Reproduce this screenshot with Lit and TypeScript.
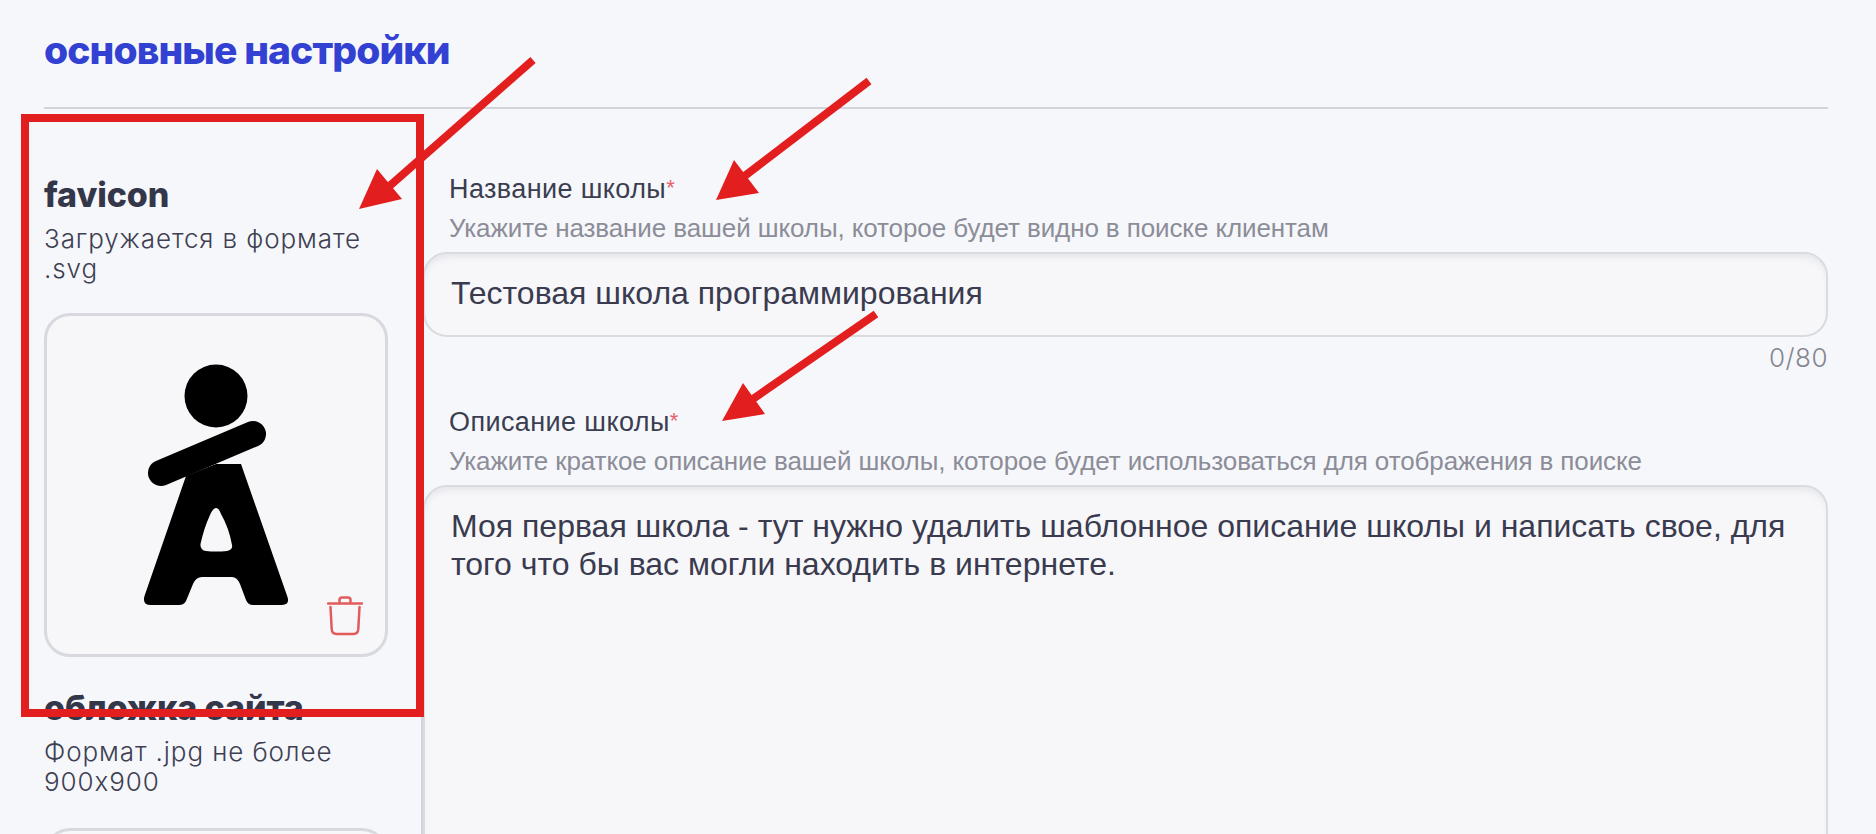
import { html, css, LitElement } from 'lit';
import { customElement } from 'lit/decorators.js';

@customElement('app-root')
export class AppRoot extends LitElement {
  static styles = css`
    :host {
      display: block;
      position: relative;
      height: 834px;
      overflow: hidden;
      background: #f6f7fb;
      color: #383a4e;
      font-family: "Liberation Sans", Arial, sans-serif;
    }

    .page {
      padding: 0 48px 0 44px;
    }

    .title {
      box-sizing: border-box;
      height: 109px;
      margin: 0;
      padding-top: 28px;
      font-family: Inter, sans-serif;
      font-size: 39px;
      line-height: 44px;
      font-weight: 800;
      letter-spacing: -0.9px;
      color: #3341d2;
      border-bottom: 2px solid #d2d4db;
    }

    .columns {
      display: flex;
    }

    .side {
      width: 379px;
      flex: none;
      box-sizing: border-box;
      height: 717px;
      margin-top: 8px;
      padding-top: 57px;
      border-right: 2px solid #d2d4db;
    }

    .side h3 {
      margin: 0;
      font-family: Inter, sans-serif;
      font-size: 34px;
      line-height: 42px;
      font-weight: 800;
      letter-spacing: -0.1px;
      color: #34364a;
    }

    .side p {
      margin: 8px 0 0;
      width: 340px;
      font-family: Inter, sans-serif;
      font-size: 26px;
      line-height: 30px;
      font-weight: 300;
      letter-spacing: 0.9px;
      color: #3e4052;
    }

    .card {
      position: relative;
      display: flex;
      align-items: center;
      justify-content: center;
      box-sizing: border-box;
      width: 344px;
      height: 344px;
      margin-top: 29px;
      background: #f7f7fa;
      border: 3px solid #d8d9df;
      border-radius: 26px;
    }

    .card + h3 {
      margin-top: 30px;
    }

    .card.cover {
      margin-top: 31px;
    }

    .trash {
      position: absolute;
      right: 22px;
      bottom: 18px;
    }

    .main {
      flex: 1;
      min-width: 0;
      padding-top: 61px;
    }

    .label {
      margin-left: 26px;
      font-size: 27px;
      line-height: 36px;
      letter-spacing: 0.4px;
      color: #3b3d50;
    }

    .label span {
      color: #e8606e;
      font-size: 22px;
      vertical-align: 3px;
    }

    .hint {
      margin: 5px 0 0 26px;
      font-size: 26px;
      line-height: 32px;
      letter-spacing: -0.1px;
      color: #8c8d98;
    }

    .field {
      box-sizing: border-box;
      margin-top: 8px;
      padding: 0 26px;
      background: #f7f7fa;
      border: 2px solid #dadbe0;
      border-radius: 24px;
      box-shadow: inset 0 6px 7px -3px rgba(60, 65, 90, 0.1);
      font-size: 32px;
      color: #3a3b4f;
    }

    .field.single {
      height: 85px;
      line-height: 79px;
    }

    .field.area {
      height: 430px;
      margin-top: 8px;
      padding-top: 20px;
      line-height: 38px;
    }

    .counter {
      margin-top: 6px;
      text-align: right;
      font-family: Inter, sans-serif;
      font-size: 26px;
      line-height: 30px;
      font-weight: 300;
      letter-spacing: 0.5px;
      color: #85868f;
    }

    .counter + .label {
      margin-top: 30px;
    }

    .marks {
      position: absolute;
      left: 0;
      top: 0;
      pointer-events: none;
    }
  `;

  private renderLogo() {
    return html`<svg width="150" height="250" viewBox="140 360 150 250" aria-hidden="true">
      <circle cx="215" cy="396" r="31.5" fill="#000"></circle>
      <path fill="#000" fill-rule="evenodd" d="M185 476 L143.5 596 Q141 605 150 605 L178 605 Q183 605 185 601 L192 584 Q195 577 201 577 L231 577 Q236 577 239 584 L245 600 Q247 605 252 605 L281 605 Q289 605 286.5 597 L240 464 L215 464 Z M215 508 Q212 508 209 515 Q203 528 199.5 544 Q199 550 205 551 Q215 552 226 551 Q232 550 231 545 Q228 528 220 514 Q218 508 215 508 Z"></path>
      <path d="M160 473 L252 434" stroke="#000" stroke-width="26" stroke-linecap="round" fill="none"></path>
    </svg>`;
  }

  private renderTrash() {
    return html`<svg class="trash" width="36" height="40" viewBox="0 0 36 40" fill="none" stroke="#e25c5c" stroke-width="2.5" stroke-linecap="round" aria-hidden="true">
      <path d="M1 7.5 H35"></path>
      <path d="M12.5 7 V4 Q12.5 1.5 15 1.5 H21 Q23.5 1.5 23.5 4 V7"></path>
      <path d="M3.5 11 L4.7 33 Q5 38 9.5 38 H26.5 Q31 38 31.3 33 L32.5 11"></path>
    </svg>`;
  }

  // screenshot annotations: red frame and arrows on top of the page
  private renderMarks() {
    const red = '#e31e1e';
    return html`<svg class="marks" width="1876" height="834" viewBox="0 0 1876 834" aria-hidden="true">
      <rect x="25" y="118" width="395" height="595" fill="none" stroke=${red} stroke-width="8"></rect>
      <path d="M533 60 L385 190" stroke=${red} stroke-width="8" fill="none"></path>
      <polygon points="359,209 377,169 402,199" fill=${red}></polygon>
      <path d="M869 81 L742 178" stroke=${red} stroke-width="8" fill="none"></path>
      <polygon points="716,200 734,160 759,193" fill=${red}></polygon>
      <path d="M876 314 L750 401" stroke=${red} stroke-width="8" fill="none"></path>
      <polygon points="722,421 743,383 765,414" fill=${red}></polygon>
    </svg>`;
  }

  render() {
    return html`
      <div class="page">
        <h1 class="title">основные настройки</h1>
        <div class="columns">
          <aside class="side">
            <h3>favicon</h3>
            <p>Загружается в формате .svg</p>
            <div class="card">
              ${this.renderLogo()}
              ${this.renderTrash()}
            </div>
            <h3>обложка сайта</h3>
            <p>Формат .jpg не более 900x900</p>
            <div class="card cover"></div>
          </aside>
          <section class="main">
            <div class="label">Название школы<span>*</span></div>
            <div class="hint">Укажите название вашей школы, которое будет видно в поиске клиентам</div>
            <div class="field single">Тестовая школа программирования</div>
            <div class="counter">0/80</div>
            <div class="label">Описание школы<span>*</span></div>
            <div class="hint">Укажите краткое описание вашей школы, которое будет использоваться для отображения в поиске</div>
            <div class="field area">Моя первая школа - тут нужно удалить шаблонное описание школы и написать свое, для того что бы вас могли находить в интернете.</div>
          </section>
        </div>
      </div>
      ${this.renderMarks()}
    `;
  }
}
